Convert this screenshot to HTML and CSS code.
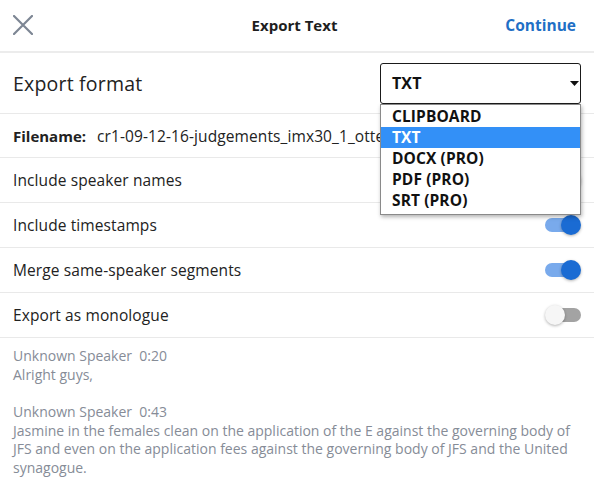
FILE: index.html
```html
<!DOCTYPE html>
<html>
<head>
<meta charset="utf-8">
<link rel="stylesheet" href="styles.css">
</head>
<body>
<div class="app">
  <header class="topbar">
    <div class="close">
      <svg width="20" height="20" viewBox="0 0 20 20"><path d="M1 1L19 19M19 1L1 19" stroke="#7d8694" stroke-width="2.2" fill="none" stroke-linecap="round"/></svg>
    </div>
    <div class="title">Export Text</div>
    <div class="action">Continue</div>
  </header>

  <div class="row row-format">
    <span class="format-label">Export format</span>
    <div class="select-wrap">
      <div class="select">
        <span>TXT</span>
        <svg class="caret" width="9" height="5" viewBox="0 0 9 5"><path d="M0 0H9L4.5 5Z" fill="#111"/></svg>
      </div>
      <ul class="menu">
        <li>CLIPBOARD</li>
        <li class="active">TXT</li>
        <li>DOCX (PRO)</li>
        <li>PDF (PRO)</li>
        <li>SRT (PRO)</li>
      </ul>
    </div>
  </div>

  <div class="row row-file">
    <span class="file-label">Filename:</span>
    <span class="file-name">cr1-09-12-16-judgements_imx30_1_otter</span>
  </div>

  <div class="row">
    <span>Include speaker names</span>
    <span class="toggle on"><span class="thumb"></span></span>
  </div>
  <div class="row">
    <span>Include timestamps</span>
    <span class="toggle on"><span class="thumb"></span></span>
  </div>
  <div class="row">
    <span>Merge same-speaker segments</span>
    <span class="toggle on"><span class="thumb"></span></span>
  </div>
  <div class="row">
    <span>Export as monologue</span>
    <span class="toggle off"><span class="thumb"></span></span>
  </div>

  <div class="preview">
    <p>Unknown Speaker&nbsp; 0:20<br>Alright guys,</p>
    <p>Unknown Speaker&nbsp; 0:43<br>Jasmine in the females clean on the application of the E against the governing body of JFS and even on the application fees against the governing body of JFS and the United synagogue.</p>
  </div>
</div>
</body>
</html>
```

FILE: styles.css
```css
* { box-sizing: border-box; }
html, body { margin: 0; padding: 0; background: #fff; }
body {
  font-family: "Open Sans", Lato, "Liberation Sans", sans-serif;
  color: #1e1e1e;
  width: 594px;
  height: 479px;
  overflow: hidden;
}
.app { display: flex; flex-direction: column; }

.topbar {
  height: 53px;
  display: grid;
  grid-template-columns: 1fr auto 1fr;
  align-items: center;
  padding: 0 18px 2px 13px;
  border-bottom: 2px solid #ececec;
}
.close { display: flex; align-items: center; }
.close svg { display: block; }
.title { font-weight: 700; font-size: 15px; color: #1e1e1e; }
.action { justify-self: end; font-weight: 700; font-size: 15.5px; color: #1f6fc5; }

.row {
  display: flex;
  align-items: center;
  justify-content: space-between;
  height: 45px;
  padding: 0 13px;
  border-bottom: 1px solid #e9e9e9;
  font-size: 15.5px;
  letter-spacing: 0.1px;
  color: #222;
}
.row-format { height: 61px; padding-right: 13px; }
.format-label { font-size: 19.5px; letter-spacing: 0.2px; color: #222; }
.row-file { height: 44px; justify-content: flex-start; gap: 11px; overflow: hidden; white-space: nowrap; }
.file-label { font-weight: 700; font-size: 15px; letter-spacing: 0; }
.file-name { font-size: 15.5px; }

.select-wrap { position: relative; width: 201px; }
.select {
  height: 41px;
  border: 1px solid #1a1a1a;
  border-radius: 3px;
  display: flex;
  align-items: center;
  justify-content: space-between;
  padding: 0 1px 0 11px;
  font-weight: 700;
  font-size: 16px;
  color: #111;
}
.caret { display: block; }
.menu {
  position: absolute;
  left: 0;
  top: 41px;
  width: 201px;
  margin: 0;
  padding: 1px 0 3px;
  list-style: none;
  background: #fff;
  border: 1px solid #8a8a8a;
  box-shadow: 1px 2px 4px rgba(0,0,0,0.3);
  z-index: 5;
}
.menu li {
  height: 21px;
  line-height: 21px;
  padding-left: 11px;
  font-weight: 700;
  font-size: 15.5px;
  letter-spacing: 0.1px;
  color: #111;
}
.menu li.active { background: #3390f7; color: #fff; }

.toggle {
  position: relative;
  width: 36px;
  height: 20px;
  display: inline-block;
  flex: none;
}
.toggle::before {
  content: "";
  position: absolute;
  left: 0;
  top: 3px;
  width: 34px;
  height: 14px;
  border-radius: 7px;
}
.toggle .thumb {
  position: absolute;
  top: 0;
  width: 20px;
  height: 20px;
  border-radius: 50%;
  box-shadow: 0 1px 3px rgba(0,0,0,0.3);
}
.toggle.on::before { background: #79aaec; }
.toggle.on .thumb { right: 0; background: #1a6bd3; }
.toggle.off::before { background: #a3a3a3; left: 2px; }
.toggle.off .thumb { left: 0; background: #f6f6f6; }

.preview {
  padding: 9px 13px 0;
  font-size: 14px;
  line-height: 18.5px;
  color: #868c97;
}
.preview p { margin: 0 0 19px; }
```
